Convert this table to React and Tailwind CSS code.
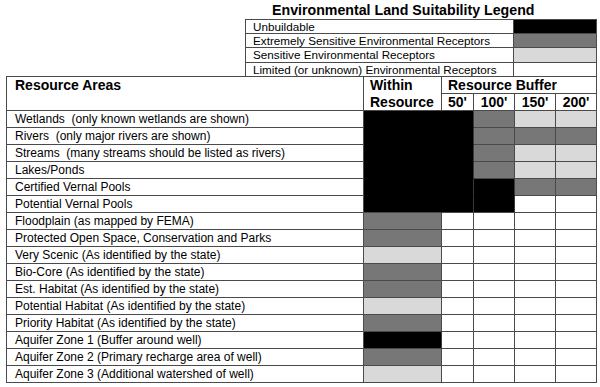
import React from "react";

const FILL = {
  k: "bg-black",
  d: "bg-[#777777]",
  l: "bg-[#d9d9d9]",
  w: "bg-white",
};

const rows = [
  ["Wetlands  (only known wetlands are shown)", ["k", "k", "d", "l", "l"]],
  ["Rivers  (only major rivers are shown)", ["k", "k", "d", "d", "d"]],
  ["Streams  (many streams should be listed as rivers)", ["k", "k", "d", "l", "l"]],
  ["Lakes/Ponds", ["k", "k", "d", "l", "l"]],
  ["Certified Vernal Pools", ["k", "k", "k", "d", "d"]],
  ["Potential Vernal Pools", ["k", "k", "k", "w", "w"]],
  ["Floodplain (as mapped by FEMA)", ["d", "w", "w", "w", "w"]],
  ["Protected Open Space, Conservation and Parks", ["d", "w", "w", "w", "w"]],
  ["Very Scenic (As identified by the state)", ["l", "w", "w", "w", "w"]],
  ["Bio-Core (As identified by the state)", ["d", "w", "w", "w", "w"]],
  ["Est. Habitat (As identified by the state)", ["d", "w", "w", "w", "w"]],
  ["Potential Habitat (As identified by the state)", ["l", "w", "w", "w", "w"]],
  ["Priority Habitat (As identified by the state)", ["d", "w", "w", "w", "w"]],
  ["Aquifer Zone 1 (Buffer around well)", ["k", "w", "w", "w", "w"]],
  ["Aquifer Zone 2 (Primary recharge area of well)", ["d", "w", "w", "w", "w"]],
  ["Aquifer Zone 3 (Additional watershed of well)", ["l", "w", "w", "w", "w"]],
];

const legend = [
  ["Unbuildable", "bg-black", "h-[14px]"],
  ["Extremely Sensitive Environmental Receptors", "bg-[#777777]", "h-[14px]"],
  ["Sensitive Environmental Receptors", "bg-[#d9d9d9]", "h-[15px]"],
  ["Limited (or unknown) Environmental Receptors", "bg-white", "h-[14px]"],
];

function FillCell({ fill, rightBlack, bottomBlack, rightK }) {
  const br = rightBlack ? "border-r-black" : rightK ? "border-r-[#3a3a3a]" : "border-r-[#4a4a4a]";
  const bb = bottomBlack ? "border-b-black" : "border-b-[#4a4a4a]";
  return <div className={`h-[17px] border-r border-b ${br} ${bb} ${FILL[fill]}`} />;
}

export default function App() {
  return (
    <div className="w-[600px] h-[387px] bg-white text-black font-['Liberation_Sans',Arial,sans-serif] overflow-hidden">
      <div className="h-[19px] pl-[272px] pt-[2px] text-[14.2px] leading-[17px] font-bold whitespace-nowrap">
        Environmental Land Suitability Legend
      </div>

      <div className="ml-[245px] w-fit grid grid-cols-[268px_83px] border-l border-t border-[#4a4a4a]">
        {legend.map(([label, bg, h]) => (
          <React.Fragment key={label}>
            <div className={`${h} border-r border-b border-[#4a4a4a] pl-[7px] text-[11.7px] leading-[13px] whitespace-nowrap`}>
              {label}
            </div>
            <div className={`${h} border-r border-b border-[#4a4a4a] ${bg}`} />
          </React.Fragment>
        ))}
      </div>

      <div className="-mt-px ml-[6px] w-fit grid grid-cols-[357px_78px_32px_41px_41px_41px] border-l border-t border-[#4a4a4a]">
        <div className="row-span-2 h-[34px] border-r border-b border-[#4a4a4a] pl-[8px] text-[14px] leading-[16px] font-bold">
          Resource Areas
        </div>
        <div className="row-span-2 h-[34px] border-r border-b border-[#4a4a4a] pl-[6px] text-[14px] leading-[17px] font-bold">
          <div>Within</div>
          <div>Resource</div>
        </div>
        <div className="col-span-4 h-[17px] border-r border-b border-[#4a4a4a] pl-[6px] text-[14px] leading-[16px] font-bold whitespace-nowrap">
          Resource Buffer
        </div>
        {["50'", "100'", "150'", "200'"].map((t) => (
          <div key={t} className="h-[17px] border-r border-b border-[#4a4a4a] text-center text-[14px] leading-[16px] font-bold">
            {t}
          </div>
        ))}

        {rows.map(([label, fills], ri) => (
          <React.Fragment key={label}>
            <div className="h-[17px] border-r border-b border-[#4a4a4a] pl-[8px] text-[12px] leading-[16px] whitespace-pre">
              {label}
            </div>
            {fills.map((f, ci) => {
              const next = fills[ci + 1];
              const below = rows[ri + 1] ? rows[ri + 1][1][ci] : null;
              const rightBlack = f === "k" && next === "k" && ci !== 1;
              const bottomBlack = f === "k" && below === "k";
              return (
                <FillCell
                  key={ci}
                  fill={f}
                  rightBlack={rightBlack}
                  bottomBlack={bottomBlack}
                  rightK={f === "k"}
                />
              );
            })}
          </React.Fragment>
        ))}
      </div>
    </div>
  );
}
